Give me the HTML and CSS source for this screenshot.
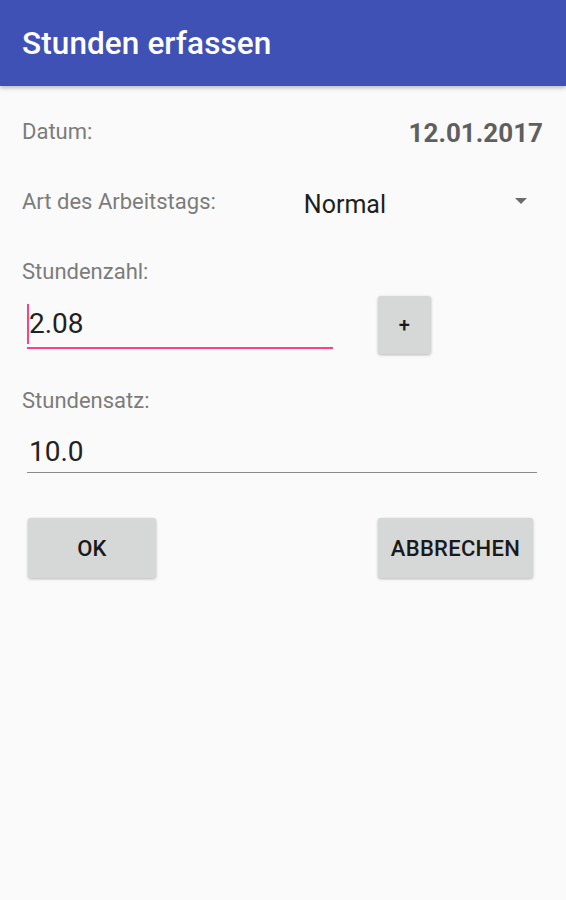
FILE: index.html
```html
<!DOCTYPE html>
<html>
<head>
  <link rel="stylesheet" href="styles.css">
</head>
<body>
  <header class="appbar">
    <h1>Stunden erfassen</h1>
  </header>

  <main class="form">
    <div class="row row-date">
      <span class="label">Datum:</span>
      <span class="date">12.01.2017</span>
    </div>

    <div class="row row-type">
      <span class="label">Art des Arbeitstags:</span>
      <div class="spinner">
        <span>Normal</span>
        <svg class="arrow" width="12" height="6" viewBox="0 0 12 6"><path d="M0 0h12L6 6z" fill="#6b6b6b"/></svg>
      </div>
    </div>

    <div class="field">
      <span class="label">Stundenzahl:</span>
      <div class="field-line">
        <div class="input input-active">
          <span class="caret"></span>2.08
        </div>
        <button class="btn btn-plus">+</button>
      </div>
    </div>

    <div class="field field-rate">
      <span class="label">Stundensatz:</span>
      <div class="input input-wide">10.0</div>
    </div>

    <div class="actions">
      <button class="btn btn-ok">OK</button>
      <button class="btn btn-cancel">ABBRECHEN</button>
    </div>
  </main>
</body>
</html>
```

FILE: styles.css
```css
body {
  margin: 0;
  background-color: #fafafa;
  font-family: Roboto, 'Noto Sans', sans-serif;
  min-height: 100vh;
}

/* top bar */
.appbar {
  height: 86px;
  background-color: #3f51b5;
  display: flex;
  align-items: center;
  padding-left: 22px;
  box-shadow: 0 2px 4px rgba(0, 0, 0, 0.25);
}

.appbar h1 {
  margin: 0;
  color: #ffffff;
  font-size: 31.5px;
  font-weight: 500;
  letter-spacing: 0.1px;
}

.form {
  padding: 0 23px 0 22px;
}

.label {
  color: #7c7c7c;
  font-size: 22px;
}

.row {
  display: flex;
  align-items: center;
}

.row-date {
  justify-content: space-between;
  height: 40px;
  margin-top: 25px;
}

.date {
  color: #5f5f5f;
  font-size: 26px;
  font-weight: 700;
  margin-top: 3px;
}

.row-type {
  height: 40px;
  margin-top: 30px;
}

.spinner {
  flex: 1;
  display: flex;
  align-items: center;
  justify-content: space-between;
  margin-left: 88px;
  margin-top: 6px;
  padding-right: 16px;
  font-size: 25px;
  color: #1e1e1e;
}

.arrow {
  margin-top: -6px;
}

.field {
  margin-top: 38px;
}

.field-rate {
  margin-top: 34px;
}

.field-line {
  display: flex;
  align-items: center;
  margin-top: 12px;
}

.input {
  position: relative;
  font-size: 28px;
  color: #212121;
  height: 46px;
  line-height: 46px;
  margin-left: 5px;
  padding-left: 2px;
  border-bottom: 1px solid #8a8a8a;
}

.input-active {
  width: 304px;
  border-bottom: 2px solid #ff4081;
}

.caret {
  position: absolute;
  left: 0;
  top: 3px;
  width: 2px;
  height: 40px;
  background-color: #ff4081;
}

.input-wide {
  height: 41px;
  line-height: 41px;
  margin-top: 18px;
  margin-right: 6px;
}

.btn {
  border: none;
  border-radius: 3px;
  background-color: #d6d7d7;
  box-shadow: 0 1px 3px rgba(0, 0, 0, 0.28);
  font-family: Roboto, 'Noto Sans', sans-serif;
  font-weight: 500;
  font-size: 22px;
  letter-spacing: 0.3px;
  color: #1a1a1a;
  padding: 0;
}

.btn-plus {
  width: 53px;
  height: 58px;
  margin-left: 45px;
  font-size: 20px;
}

.actions {
  display: flex;
  justify-content: space-between;
  margin-top: 45px;
  padding-left: 6px;
}

.btn-ok {
  width: 128px;
  height: 60px;
}

.btn-cancel {
  width: 155px;
  height: 60px;
  margin-right: 10px;
}
```
